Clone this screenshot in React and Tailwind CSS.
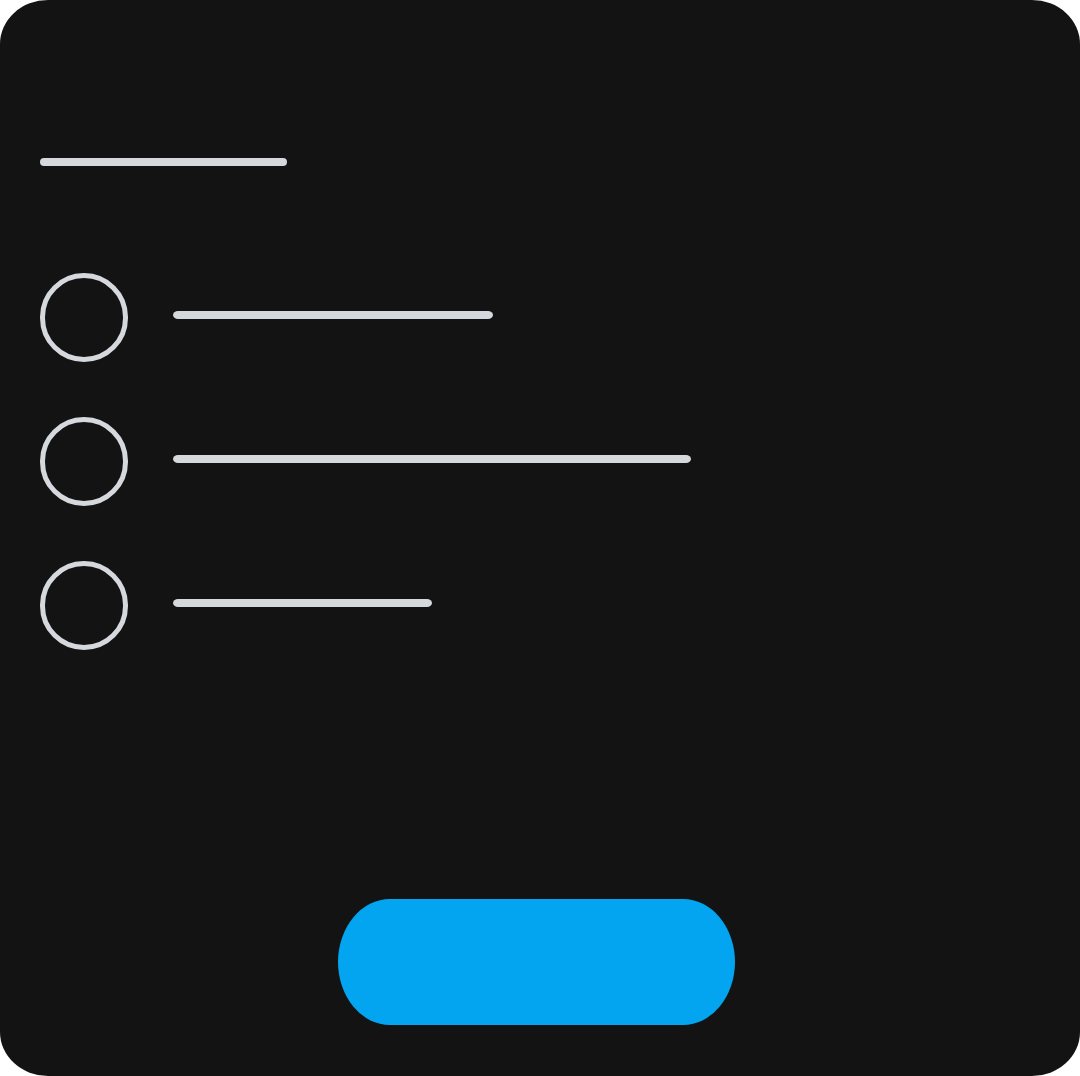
import React from 'react';

const ROWS = [320, 518, 259];

function Option({ width }) {
  return (
    <div className="flex items-center h-[89px]">
      <div className="w-[88px] h-[89px] rounded-full border-[5px] border-[#d5d9dd] shrink-0" />
      <div className="ml-[45px] mb-[6px] h-2 rounded-[5px/4px] bg-[#d5d9dd]" style={{ width }} />
    </div>
  );
}

export default function App() {
  return (
    <div className="w-[1080px] h-[1076px] bg-white">
      <div className="w-[1080px] h-[1076px] bg-[#131313] rounded-[48px/44px] flex flex-col pl-10 pt-[158px]">
        <div className="w-[247px] h-2 rounded-full bg-[#d5d9dd]" />
        <div className="mt-[107px] flex flex-col gap-[55px]">
          {ROWS.map((w, i) => (
            <Option key={i} width={w} />
          ))}
        </div>
        <button className="mt-[249px] ml-[298px] w-[397px] h-[126px] rounded-[52px/63px] bg-[#03a5f0]" />
      </div>
    </div>
  );
}
